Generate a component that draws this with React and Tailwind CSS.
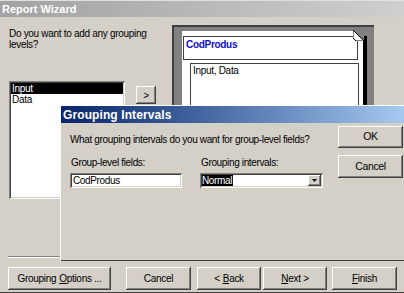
import React from 'react'

const raised =
  'shadow-[inset_-1px_-1px_0_#404040,inset_1px_1px_0_#ffffff,inset_-2px_-2px_0_#808080,inset_2px_2px_0_#d4d0c8]'
const sunken =
  'shadow-[inset_1px_1px_0_#808080,inset_-1px_-1px_0_#ffffff,inset_2px_2px_0_#404040,inset_-2px_-2px_0_#d4d0c8]'

const WinButton = ({ children, className = '' }) => (
  <button className={`flex items-center justify-center bg-[#d4d0c8] text-black ${raised} ${className}`}>
    {children}
  </button>
)

const PreviewPage = () => (
  <div className="ml-[16px] mt-[8px] w-[202px] h-[120px] bg-[#808080] border-t-2 border-l-2 border-[#404040] pl-[8px] pt-[4px] flex">
    <div className="relative w-[181px] bg-white pt-[5px] pl-[1px] shadow-[4px_5px_0_#000]">
      {/* folded corner */}
      <svg className="absolute -top-[1px] -right-[1px]" width="11" height="11" viewBox="0 0 11 11">
        <polygon points="0,0 11,0 11,11" fill="#808080" />
        <polygon points="0,0 11,11 3,11 0,8" fill="#ffffff" stroke="#000" strokeWidth="1" />
      </svg>
      <div className="w-[175px] h-[24px] border border-[#404040] pl-[2px] pt-[2px] text-[10px] font-bold text-[#1010d0] leading-[12px]">
        CodProdus
      </div>
      <div className="ml-[7px] mt-[3px] w-[169px] h-[60px] border border-[#404040] pl-[2px] pt-[1px] text-[10px] leading-[12px] tracking-[-0.3px]">
        Input, Data
      </div>
    </div>
  </div>
)

const GroupingDialog = () => (
  <div className="absolute left-[60px] top-[105px] w-[346px] h-[156px] bg-[#d4d0c8] p-[1px] shadow-[inset_1px_1px_0_#ffffff,inset_-1px_-1px_0_#404040] flex flex-col">
    <div className="h-[17px] bg-gradient-to-r from-[#0a246a] to-[#a6caf0] flex items-center pl-[2px] text-white font-bold text-[12px] tracking-[0.1px]">
      Grouping Intervals
    </div>
    <div className="flex flex-1 tracking-[-0.35px]">
      <div className="flex-1 pl-[9px]">
        <div className="mt-[11px] text-[10px] leading-[11px]">
          What grouping intervals do you want for group-level fields?
        </div>
        <div className="flex mt-[12px]">
          <div className="w-[130px]">
            <div className="pl-[1px] text-[10px] leading-[11px]">Group-level fields:</div>
            <div className={`mt-[5px] w-[112px] h-[15px] bg-white ${sunken} pl-[3px] text-[10px] leading-[15px]`}>
              CodProdus
            </div>
          </div>
          <div>
            <div className="pl-[1px] text-[10px] leading-[11px]">Grouping intervals:</div>
            <div className={`mt-[5px] w-[123px] h-[15px] bg-white ${sunken} pl-[2px] pt-[2px] flex`}>
              <span className="h-[11px] bg-black text-white text-[10px] leading-[11px] pr-[1px]">Normal</span>
              <div className={`ml-auto mr-[2px] w-[13px] h-[11px] ${raised} bg-[#d4d0c8] flex items-center justify-center`}>
                <svg width="5" height="3" viewBox="0 0 5 3"><polygon points="0,0 5,0 2.5,3" fill="#000" /></svg>
              </div>
            </div>
          </div>
        </div>
      </div>
      <div className="w-[65px] mr-[2px] pt-[3px] flex flex-col gap-[7px]">
        <WinButton className="h-[22px] text-[10.5px]">OK</WinButton>
        <WinButton className="h-[23px] text-[10.5px]">Cancel</WinButton>
      </div>
    </div>
  </div>
)

export default function App() {
  return (
    <div className="relative w-[404px] h-[293px] bg-[#d4d0c8] overflow-hidden flex flex-col font-['Liberation_Sans',Arial,sans-serif] text-black border-b border-[#404040]">
      <div className="h-[17px] shrink-0 bg-gradient-to-r from-[#a2a2a2] to-[#cfcfcf] border-t border-[#e0e0e0] flex items-center pl-[2px] text-white font-bold text-[11px]">
        Report Wizard
      </div>

      <div className="flex-1 flex pl-[9px] tracking-[-0.3px]">
        <div className="w-[116px] shrink-0">
          <div className="mt-[11px] w-[160px] text-[10px] leading-[11px]">
            Do you want to add any grouping
            <br />
            levels?
          </div>
          <div className={`mt-[31px] h-[118px] bg-white ${sunken} p-[2px] text-[10px] leading-[11px]`}>
            <div className="bg-black text-white pl-[1px]">Input</div>
            <div className="pl-[1px]">Data</div>
          </div>
        </div>
        <WinButton className="ml-[11px] mt-[69px] w-[20px] h-[18px] text-[10px]">&gt;</WinButton>
        <PreviewPage />
      </div>

      <div className="mx-[8px] h-[2px] border-t border-[#808080] border-b border-b-white" />

      <div className="flex pl-[8px] pt-[9px] pb-[1px] text-[10px] h-[34px] tracking-[-0.3px]">
        <WinButton className="w-[103px] h-[23px]">
          Grouping <span className="underline ml-[3px]">O</span>ptions ...
        </WinButton>
        <WinButton className="ml-[15px] w-[65px] h-[23px]">Cancel</WinButton>
        <WinButton className="ml-[6px] w-[64px] h-[23px]">
          &lt; <span className="underline ml-[3px]">B</span>ack
        </WinButton>
        <WinButton className="ml-[2px] w-[64px] h-[23px]">
          <span className="underline">N</span>ext &gt;
        </WinButton>
        <WinButton className="ml-[5px] w-[65px] h-[23px]">
          <span className="underline">F</span>inish
        </WinButton>
      </div>

      <GroupingDialog />
    </div>
  )
}
